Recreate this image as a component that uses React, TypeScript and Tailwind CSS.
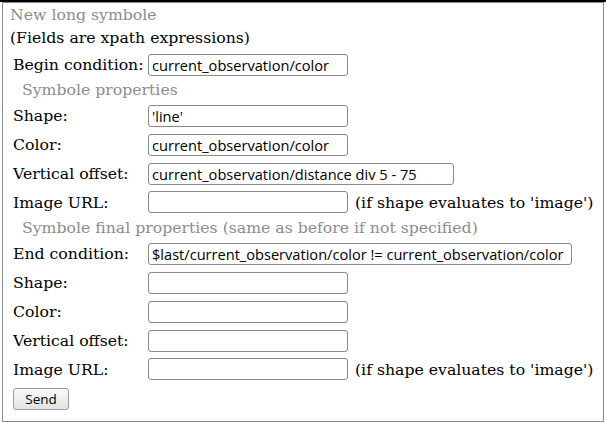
import React from 'react';

const serif = { fontFamily: '"DejaVu Serif", serif' };

const Field: React.FC<{ value?: string; w?: string }> = ({ value = '', w = 'w-[200px]' }) => (
    <input
        readOnly
        value={value}
        className={`${w} h-[22px] rounded-[3px] border border-[#8a8a8a] bg-white px-[3px] text-[14.6px] text-black font-['Open_Sans',sans-serif] outline-none`}
    />
);

const Row: React.FC<{ label: string; children: React.ReactNode }> = ({ label, children }) => (
    <div className="flex h-[29px] items-center">
        <span className="w-[145px] shrink-0 whitespace-nowrap pl-[10px]">{label}</span>
        <div className="flex items-center gap-[7px]">{children}</div>
    </div>
);

const Heading: React.FC<{ text: string }> = ({ text }) => (
    <div className="flex h-[22px] items-center pl-[19px] text-[#8c8c8c]">{text}</div>
);

export default function App() {
    return (
        <div className="w-[606px] h-[423px] bg-white border-t-2 border-black" style={serif}>
            <div className="ml-[2px] mr-[2px] h-[420px] border border-[#8a8a8a] pt-[1px] text-[15.7px] text-black">
                <div className="flex h-[22px] items-center pl-[7px] text-[#8c8c8c]">New long symbole</div>
                <div className="flex h-[24px] items-center pl-[7px]">(Fields are xpath expressions)</div>
                <Row label="Begin condition:">
                    <Field value="current_observation/color" />
                </Row>
                <Heading text="Symbole properties" />
                <Row label="Shape:">
                    <Field value="'line'" />
                </Row>
                <Row label="Color:">
                    <Field value="current_observation/color" />
                </Row>
                <Row label="Vertical offset:">
                    <Field value="current_observation/distance div 5 - 75" w="w-[306px]" />
                </Row>
                <Row label="Image URL:">
                    <Field />
                    <span>(if shape evaluates to 'image')</span>
                </Row>
                <Heading text="Symbole final properties (same as before if not specified)" />
                <Row label="End condition:">
                    <Field value="$last/current_observation/color != current_observation/color" w="w-[424px]" />
                </Row>
                <Row label="Shape:">
                    <Field />
                </Row>
                <Row label="Color:">
                    <Field />
                </Row>
                <Row label="Vertical offset:">
                    <Field />
                </Row>
                <Row label="Image URL:">
                    <Field />
                    <span>(if shape evaluates to 'image')</span>
                </Row>
                <div className="pl-[10px] pt-[3px]">
                    <button className="h-[22px] w-[56px] rounded-[3px] border border-[#9a9a9a] bg-gradient-to-b from-[#fafafa] to-[#e2e2e2] text-[13.5px] font-['Open_Sans',sans-serif] text-black">
                        Send
                    </button>
                </div>
            </div>
        </div>
    );
}
